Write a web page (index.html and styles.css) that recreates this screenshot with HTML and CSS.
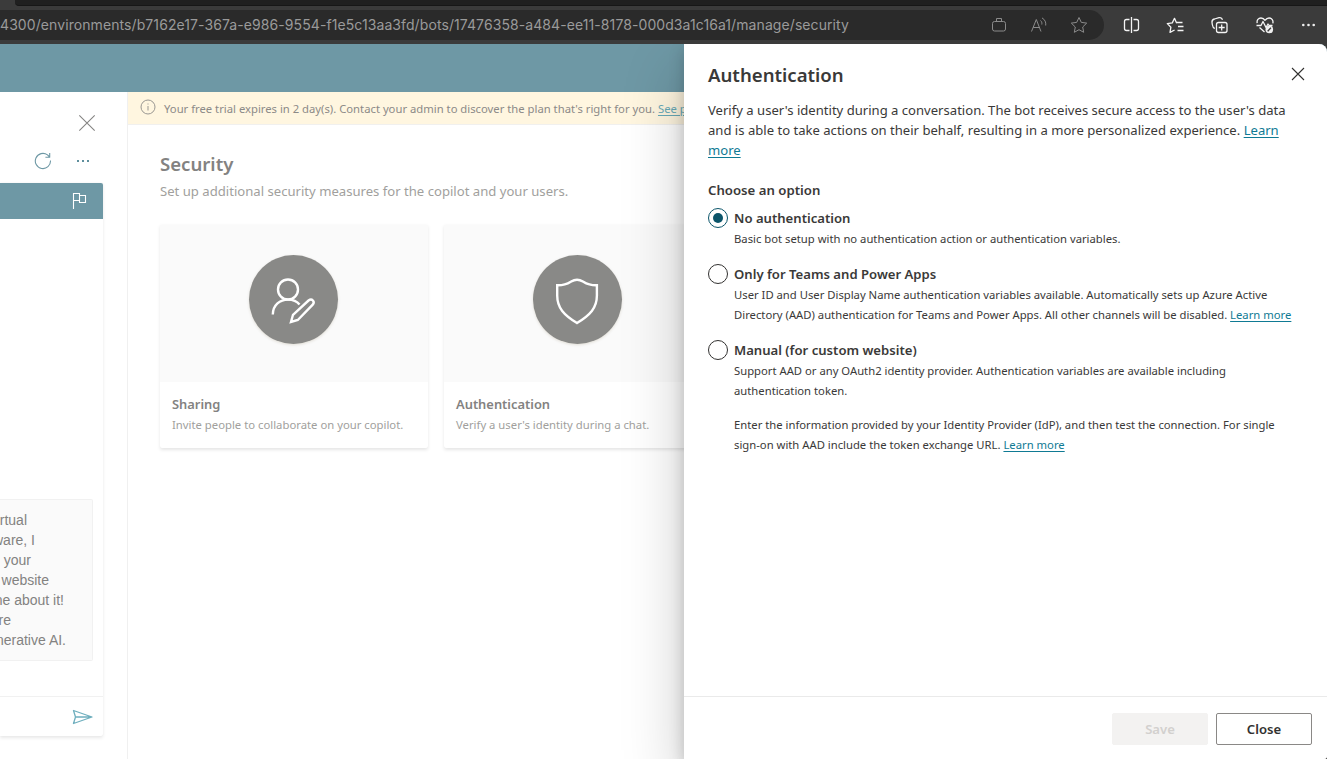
FILE: index.html
```html
<!DOCTYPE html>
<html lang="en">
<head>
<meta charset="utf-8">
<title>Authentication</title>
<link rel="stylesheet" href="styles.css">
</head>
<body>
<div class="chrome">
  <div class="tabstrip"></div>
  <div class="toolbar">
    <div class="address">
      <span class="url">4300/environments/b7162e17-367a-e986-9554-f1e5c13aa3fd/bots/17476358-a484-ee11-8178-000d3a1c16a1/manage/security</span>
      <div class="address-icons">
        <svg width="20" height="20" viewBox="0 0 20 20"><rect x="3.500" y="6.500" width="13" height="9.500" rx="2"/><path d="M7.500 6.500V3.500h5v3"/></svg>
        <svg width="20" height="20" viewBox="0 0 20 20"><path d="M2.500 16.500 7.300 4.500l4.700 12M4.200 12.500h6.300M11.500 5.500c1.200 1 1.600 2.300 1.300 4M13 2.900c2.900 1.700 4.200 4.300 3.700 7.600"/></svg>
        <svg width="20" height="20" viewBox="0 0 20 20"><path d="m10 2.500 2.300 4.900 5.400.7-4 3.900 1 5.300-4.700-2.600-4.700 2.600 1-5.300-4-3.900 5.400-.7z"/></svg>
      </div>
    </div>
    <div class="toolbar-icons">
      <svg width="20" height="20" viewBox="0 0 20 20"><path d="M10.500 2v16M8.500 4.500h-3a2 2 0 0 0-2 2v7a2 2 0 0 0 2 2h3M12.500 4.500h3a2 2 0 0 1 2 2v7a2 2 0 0 1-2 2h-3"/></svg>
      <svg width="20" height="20" viewBox="0 0 20 20"><path d="m10.700 8.300-2.200-5-2.200 4.600-5 .7 3.600 3.600-.9 5.200 4.600-2.400M10.500 7.500h6M12 11.500h5.500M11.500 15.500h6"/></svg>
      <svg width="20" height="20" viewBox="0 0 20 20"><path d="M4.800 13.500C3 13 2.700 12 2.400 10L2 7.500C1.700 5.500 2.500 4.500 4.500 4L9 2.700c1.500-.4 3 .3 3.500 2"/><rect x="6.500" y="7.500" width="10.500" height="10" rx="2"/><path d="M11.700 9.500v6M8.700 12.500h6"/></svg>
      <svg width="20" height="20" viewBox="0 0 20 20"><path d="M2.200 8.200C1.500 5 3.500 3 6 3c2 0 3.200 1 4 2.300C11 4 12.200 3 14 3c2.800 0 4.600 2.400 3.800 5.300M1.500 10.500H6l2-4 3 6 2-3.500 1 1.500h3.500M4.500 12.500l5 4.500"/><circle class="badge" cx="14.300" cy="14.500" r="3.800"/><path class="cut" d="m12.700 16.200 3.200-3.500"/></svg>
      <svg class="solid" width="20" height="20" viewBox="0 0 20 20"><circle cx="4.300" cy="10" r="1.300"/><circle cx="9.500" cy="10" r="1.300"/><circle cx="14.700" cy="10" r="1.300"/></svg>
    </div>
  </div>
</div>

<div class="app">
  <div class="app-header"></div>
  <div class="app-body">
    <aside class="test-pane">
      <svg class="pane-close" width="18" height="18" viewBox="0 0 18 18"><path d="m1.300 1.300 15.400 15.400M16.700 1.300 1.300 16.700"/></svg>
      <div class="pane-tools">
        <svg width="18" height="18" viewBox="0 0 18 18"><path d="M16.500 8.500A7.600 7.600 0 1 1 13.500 2.900L15.700 5M15.700 1v4.200h-4.300"/></svg>
        <svg class="dots" width="14" height="4" viewBox="0 0 14 4"><path d="M1 1h2v2H1zM6 1h2v2H6zM11 1h2v2h-2z"/></svg>
      </div>
      <div class="chat">
        <div class="chat-bar">
          <svg width="16" height="18" viewBox="0 0 16 18"><path d="M1.500 17V1.500h6v7h-6M7.500 3.500h6v7h-6v-2"/></svg>
        </div>
        <div class="bubble">
          <span class="w27">rtual</span>
          <span class="w35">ware, I</span>
          <span class="w31">your</span>
          <span class="w49">website</span>
          <span class="w64">ne about it!</span>
          <span class="w11">re</span>
          <span class="w66">nerative AI.</span>
        </div>
        <div class="composer">
          <svg width="22" height="16" viewBox="0 0 22 16"><path d="m1.500 1.500 18.500 6.500-18.500 6.500L3.500 8zM3.500 8H20"/></svg>
        </div>
      </div>
    </aside>
    <main class="content">
      <div class="notice">
        <svg width="16" height="16" viewBox="0 0 16 16"><circle cx="8" cy="8" r="7"/><path d="M8 7v4.500M8 4.500v1"/></svg>
        <span>Your free trial expires in 2 day(s). Contact your admin to discover the plan that's right for you. <a>See plans</a></span>
      </div>
      <h1>Security</h1>
      <p class="lead">Set up additional security measures for the copilot and your users.</p>
      <div class="cards">
        <section class="card">
          <div class="card-art"><div class="disc">
            <svg width="50" height="50" viewBox="0 0 50 50"><circle cx="19" cy="14.500" r="10"/><path d="M3.800 39.500C4 30 11 24.600 19 24.600c5 0 9 1.800 11.500 5M24 39.800l15.500-14.300c3.500-2.500 6.800 1 4.200 4.200L28.800 45l-6.800 2z"/></svg>
          </div></div>
          <div class="card-text"><h2>Sharing</h2><p>Invite people to collaborate on your copilot.</p></div>
        </section>
        <section class="card">
          <div class="card-art"><div class="disc">
            <svg width="50" height="50" viewBox="0 0 50 50"><path d="M4.200 10.300c8 .2 10.800-1.800 14-3.800 3.700-2.300 8-2.300 11.700 0 3.200 2 6 4 14 3.800v10.200c0 12.500-6.800 19.500-19.900 27.500C11 40 4.200 33 4.200 20.500z"/></svg>
          </div></div>
          <div class="card-text"><h2>Authentication</h2><p class="verify">Verify a user's identity during a chat.</p></div>
        </section>
      </div>
    </main>
  </div>

  <div class="drawer">
    <div class="drawer-main">
      <div class="drawer-head">
        <h2>Authentication</h2>
        <svg width="14" height="14" viewBox="0 0 14 14"><path d="m1 1 12 12M13 1 1 13"/></svg>
      </div>
      <p class="intro">Verify a user's identity during a conversation. The bot receives secure access to the user's data<br>and is able to take actions on their behalf, resulting in a more personalized experience. <a>Learn</a><br><a>more</a></p>
      <h3>Choose an option</h3>
      <div class="option">
        <i class="radio checked"></i>
        <div><h4>No authentication</h4><p>Basic bot setup with no authentication action or authentication variables.</p></div>
      </div>
      <div class="option">
        <i class="radio"></i>
        <div><h4>Only for Teams and Power Apps</h4><p>User ID and User Display Name authentication variables available. Automatically sets up Azure Active<br>Directory (AAD) authentication for Teams and Power Apps. All other channels will be disabled. <a>Learn more</a></p></div>
      </div>
      <div class="option">
        <i class="radio"></i>
        <div><h4>Manual (for custom website)</h4><p>Support AAD or any OAuth2 identity provider. Authentication variables are available including<br>authentication token.</p>
        <p class="more">Enter the information provided by your Identity Provider (IdP), and then test the connection. For single<br>sign-on with AAD include the token exchange URL. <a>Learn more</a></p></div>
      </div>
    </div>
    <div class="drawer-foot">
      <button class="save" disabled>Save</button>
      <button class="close">Close</button>
    </div>
  </div>
</div>
</body>
</html>
```

FILE: styles.css
```css
* { box-sizing: border-box; }
body { margin: 0; width: 1327px; height: 759px; overflow: hidden; background: #3b3b3b; font-family: "Noto Sans", "Open Sans", sans-serif; color: #3a3938; }
h1, h2, h3, h4, p { margin: 0; font-weight: 600; white-space: nowrap; }
p { font-weight: 400; }
a { color: #0f7a94; text-decoration: underline; text-underline-offset: 2px; }
svg { flex: none; display: block; fill: none; stroke-linejoin: round; }

.chrome { height: 44px; background: #3b3b3b; }
.tabstrip { height: 6px; margin-left: 15px; background: #202020; border-bottom: 1px solid #171717; border-bottom-left-radius: 4px; }
.toolbar { display: flex; height: 38px; padding-top: 4px; }
.address { display: flex; align-items: center; justify-content: space-between; width: 1104px; height: 30px; background: #2a2a2a; border-radius: 0 15px 15px 0; }
.url { font: 400 14px/30px Inter, sans-serif; color: #9a9a9a; white-space: nowrap; letter-spacing: .085px; }
.address-icons { display: flex; gap: 20px; padding-right: 15px; stroke: #8b8b8b; }
.toolbar-icons { display: flex; align-items: center; gap: 24.500px; padding-left: 17px; height: 30px; stroke: #f4f4f4; stroke-width: 1.3; }
.badge { fill: #efefef; stroke: none; }
.cut { stroke: #3b3b3b; }
.solid { fill: #efefef; stroke: none; }

.app { position: relative; height: 715px; overflow: hidden; background: #fff; border-radius: 0 8px 3px 0; }
.app-header { height: 48px; background: #6e98a5; }
.app-body { display: flex; height: 667px; }

.test-pane { width: 128px; flex: none; border-right: 1px solid #f0f0f0; }
.pane-close { margin: 22px 0 0 78px; stroke: #858483; stroke-width: 1.1; }
.pane-tools { display: flex; align-items: center; gap: 24px; margin: 20px 0 13px 34px; stroke: #6e98a5; stroke-width: 1.1; }
.pane-tools .dots { fill: #5f8f9d; stroke: none; }
.chat { display: flex; flex-direction: column; width: 103px; height: 553px; border-radius: 0 2px 2px 0; box-shadow: 0 1.600px 3.600px rgba(0,0,0,.09), 0 0 1px rgba(0,0,0,.06); }
.chat-bar { display: flex; align-items: center; justify-content: flex-end; height: 36px; padding-right: 15px; background: #6e98a5; border-top-right-radius: 2px; stroke: #fff; stroke-width: 1.1; }
.chat-bar svg { stroke-linejoin: miter; }
.bubble { width: 93px; height: 162px; margin-top: 280px; padding-top: 10px; background: #fafafa; border: 1px solid #f1f1f1; border-left: 0; border-radius: 0 2px 2px 0; color: #838281; font: 14px/20px "Liberation Sans", Arial, sans-serif; }
.bubble span { display: flex; justify-content: flex-end; white-space: nowrap; }
.w27 { width: 27px; } .w35 { width: 35px; } .w31 { width: 31px; } .w49 { width: 49px; } .w64 { width: 64px; } .w11 { width: 11px; } .w66 { width: 66px; }
.composer { display: flex; align-items: center; justify-content: flex-end; height: 40px; margin-top: auto; padding-right: 9px; border-top: 1px solid #f1f1f1; stroke: #6fafbe; stroke-width: 1.3; }

.content { flex: none; width: 900px; }
.notice { display: flex; align-items: center; gap: 8px; height: 33px; padding: 1px 0 0 12px; background: #fff6e0; border-bottom: 1px solid #f1f0ee; color: #8c8a88; stroke: #999792; font-size: 11.280px; white-space: nowrap; }
.notice svg { margin-bottom: 3px; }
.notice a { color: #68aab8; }
.content h1 { margin: 25px 0 0 32px; font-size: 18.600px; line-height: 28px; color: #838281; }
.lead { margin-left: 32px; font-size: 13.120px; line-height: 26px; color: #a19f9d; }
.cards { display: flex; gap: 16px; margin: 21px 0 0 32px; }
.card { width: 268px; height: 223px; border-radius: 2px; background: #fff; box-shadow: 0 1.600px 3.600px rgba(0,0,0,.1), 0 0 1px rgba(0,0,0,.03); }
.card-art { display: flex; justify-content: center; height: 157px; padding: 30px 1px 0 0; background: #fafafa; }
.disc { display: flex; align-items: center; justify-content: center; width: 89px; height: 89px; border-radius: 50%; background: #898987; box-shadow: 0 1px 3px rgba(80,60,0,.15); stroke: #fff; stroke-width: 2.400; }
.disc svg { stroke-linejoin: miter; }
.card-text { padding: 12px; }
.card h2 { font-size: 12.900px; line-height: 20px; color: #838281; }
.card p { font-size: 11.300px; line-height: 22px; color: #a19f9d; }

.drawer { position: absolute; top: 0; right: 0; display: flex; flex-direction: column; width: 643px; height: 715px; background: #fff; box-shadow: 0 25.600px 57.600px rgba(0,0,0,.22), 0 4.800px 14.400px rgba(0,0,0,.18); }
.drawer-main { flex: 1; padding: 17px 22px 0 24px; }
.drawer-head { display: flex; align-items: center; justify-content: space-between; height: 28px; stroke: #323130; stroke-width: 1.1; }
.drawer-head h2 { font-size: 18.600px; line-height: 28px; }
.drawer-head svg { margin-bottom: 2px; }
.intro { margin-top: 11px; font-size: 13.080px; line-height: 20px; }
.drawer h3 { margin: 20px 0 8px; font-size: 13.200px; line-height: 20px; }
.option { display: flex; gap: 6px; margin-bottom: 15px; }
.radio { width: 20px; height: 20px; flex: none; border: 1px solid #323130; border-radius: 50%; }
.checked { display: grid; place-items: center; border-color: #0b556a; }
.checked::after { content: ""; width: 10px; height: 10px; border-radius: 50%; background: #0b556a; }
.option h4 { font-size: 13.120px; line-height: 20px; margin-bottom: 1px; }
.option p { font-size: 11.280px; line-height: 20px; }
.option .more { margin-top: 14px; }
.drawer-foot { display: flex; justify-content: flex-end; gap: 8px; height: 63px; padding: 16px 15px 0 0; border-top: 1px solid #eaeaea; }
button { width: 96px; height: 32px; padding: 0; border: 1px solid #8a8886; border-radius: 2px; background: #fff; color: #323130; font: 600 13.100px/20px "Noto Sans", "Open Sans", sans-serif; }
.save { border-color: #f3f2f1; background: #f3f2f1; color: #d2d0ce; }
```
